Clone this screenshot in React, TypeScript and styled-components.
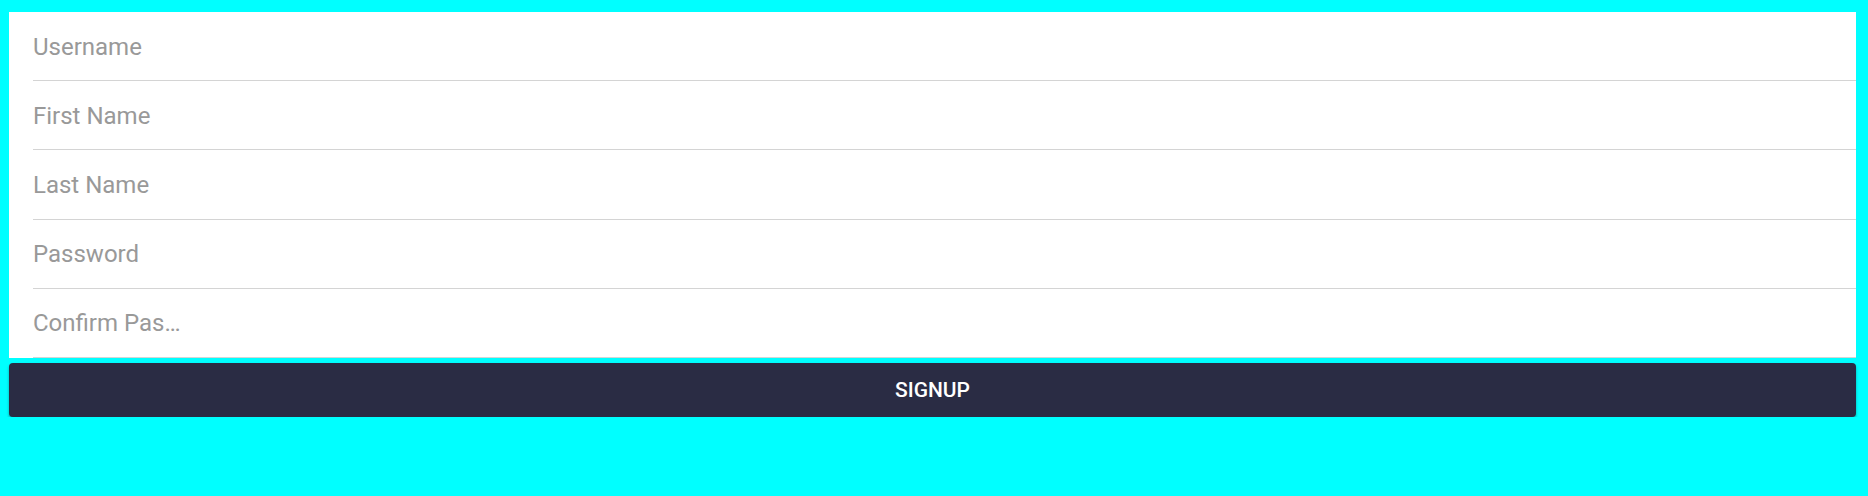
import React from 'react';
import styled, { createGlobalStyle } from 'styled-components';

const Global = createGlobalStyle`
  html, body {
    margin: 0;
    padding: 0;
    background: #00ffff;
  }
  body {
    font-family: Roboto, "Liberation Sans", Arial, sans-serif;
  }
`

const Page = styled.div`
  padding: 12px 12px 0 9px;
`

const Panel = styled.div`
  background: #ffffff;
  display: flex;
  flex-direction: column;
`

const Field = styled.label`
  display: flex;
  align-items: center;
  height: 69.2px;
  margin-left: 24px;
  padding-top: 1px;
  box-sizing: border-box;
  border-bottom: 1px solid #d4d4d4;
  font-size: 24px;
  color: #999999;
  white-space: nowrap;
  overflow: hidden;
`

const Button = styled.button`
  display: block;
  width: 100%;
  height: 54px;
  margin-top: 5px;
  border: none;
  border-radius: 4px;
  background: #2a2c44;
  color: #ffffff;
  font-family: Roboto, "Liberation Sans", Arial, sans-serif;
  font-size: 21px;
  font-weight: 500;
  text-transform: uppercase;
  box-shadow: 0 2px 3px rgba(0, 0, 0, 0.35);
  cursor: pointer;
`

const fields = ['Username', 'First Name', 'Last Name', 'Password', 'Confirm Pas…'];

export default function App() {
  return (
    <Page>
      <Global />
      <Panel>
        {fields.map((f) => (
          <Field key={f}>{f}</Field>
        ))}
      </Panel>
      <Button type="button">Signup</Button>
    </Page>
  );
}
